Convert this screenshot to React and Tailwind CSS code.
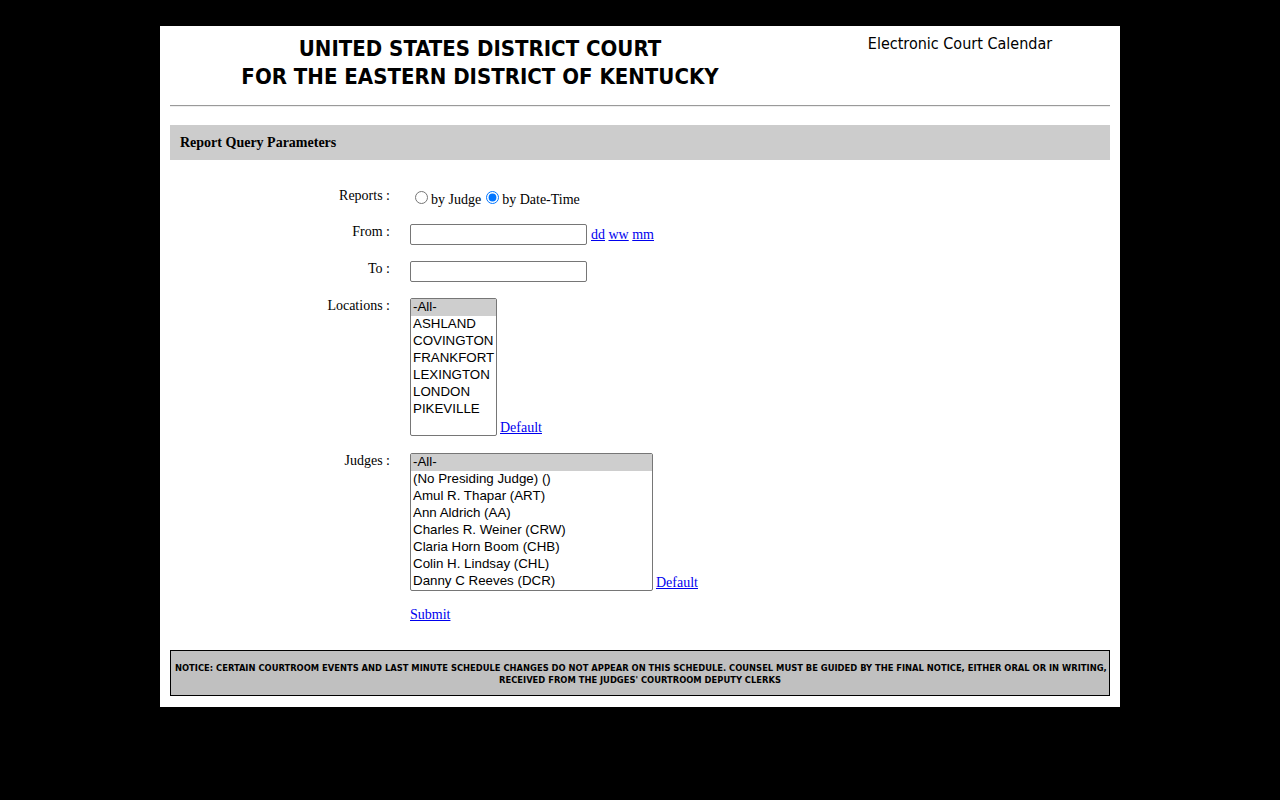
import React from "react";

const serif = { fontFamily: '"Liberation Serif", "Times New Roman", serif' };
const arial = { fontFamily: '"Liberation Sans", Arial, sans-serif' };
const tahoma = { fontFamily: '"DejaVu Sans Condensed", "DejaVu Sans", Verdana, sans-serif' };

function ListBox({ items, width, rows = 8 }) {
  const padded = [...items];
  while (padded.length < rows) padded.push("");
  return (
    <div
      className={`${width} h-[138px] border border-[#767676] rounded-[2px] bg-white overflow-hidden text-[13.333px] text-black`}
      style={arial}
    >
      {padded.slice(0, rows).map((it, i) => (
        <div
          key={i}
          className={`h-[17px] leading-[16px] pl-[2px] whitespace-nowrap ${i === 0 ? "bg-[#cecece]" : ""}`}
        >
          {it}
        </div>
      ))}
    </div>
  );
}

function Label({ children, className = "" }) {
  return (
    <div className={`w-[230px] shrink-0 text-right text-[14px] leading-[16px] text-black ${className}`} style={serif}>
      {children}
    </div>
  );
}

export default function App() {
  return (
    <div className="min-h-[800px] bg-black pt-[26px]">
      <div className="w-[960px] mx-auto bg-white pb-[11px]">
        {/* Header */}
        <div className="flex pt-[9px] h-[79px]">
          <div
            className="w-[640px] text-center font-bold text-[22px] leading-[28px] text-black"
            style={tahoma}
          >
            <div>UNITED STATES DISTRICT COURT</div>
            <div>FOR THE EASTERN DISTRICT OF KENTUCKY</div>
          </div>
          <div className="w-[320px] -mt-[1px] text-center text-[16px] leading-[19px] text-black" style={tahoma}>
            Electronic Court Calendar
          </div>
        </div>
        <div className="mx-[10px] border-t border-t-[#9a9a9a] border-b border-b-[#eeeeee]"></div>

        {/* Section bar */}
        <div className="mx-[10px] mt-[18px] h-[35px] bg-[#cccccc] flex items-center pl-[10px]">
          <span className="font-bold text-[14px] text-black" style={serif}>
            Report Query Parameters
          </span>
        </div>

        {/* Form */}
        <div className="mt-[27px]">
          <div className="flex items-start gap-[20px]">
            <Label className="mt-[1px]">Reports :</Label>
            <div className="flex items-start text-[14px] leading-[16px] text-black mt-[4px]" style={serif}>
              <input type="radio" name="rep" className="w-[13px] h-[13px] ml-[5px] mr-[3px] accent-[#0075ff]" />
              <span className="mt-[1px]">by Judge</span>
              <input type="radio" name="rep" defaultChecked className="w-[13px] h-[13px] ml-[5px] mr-[3px] accent-[#0075ff]" />
              <span className="mt-[1px]">by Date-Time</span>
            </div>
          </div>

          <div className="flex items-start gap-[20px] mt-[16px]">
            <Label>From :</Label>
            <div className="flex items-center gap-[4px]">
              <div className="w-[177px] h-[21px] border border-[#767676] rounded-[2px] bg-white"></div>
              <div className="text-[14px] leading-[16px] mt-[1px]" style={serif}>
                <a href="#" className="text-[#0000ee] underline">dd</a>{" "}
                <a href="#" className="text-[#0000ee] underline">ww</a>{" "}
                <a href="#" className="text-[#0000ee] underline">mm</a>
              </div>
            </div>
          </div>

          <div className="flex items-start gap-[20px] mt-[16px]">
            <Label>To :</Label>
            <div className="w-[177px] h-[21px] border border-[#767676] rounded-[2px] bg-white"></div>
          </div>

          <div className="flex items-start gap-[20px] mt-[16px]">
            <Label>Locations :</Label>
            <div className="flex items-end gap-[3px]">
              <ListBox
                width="w-[87px]"
                items={["-All-", "ASHLAND", "COVINGTON", "FRANKFORT", "LEXINGTON", "LONDON", "PIKEVILLE"]}
              />
              <a href="#" className="text-[14px] leading-[16px] text-[#0000ee] underline" style={serif}>
                Default
              </a>
            </div>
          </div>

          <div className="flex items-start gap-[20px] mt-[17px]">
            <Label>Judges :</Label>
            <div className="flex items-end gap-[3px]">
              <ListBox
                width="w-[243px]"
                items={[
                  "-All-",
                  "(No Presiding Judge) ()",
                  "Amul R. Thapar (ART)",
                  "Ann Aldrich (AA)",
                  "Charles R. Weiner (CRW)",
                  "Claria Horn Boom (CHB)",
                  "Colin H. Lindsay (CHL)",
                  "Danny C Reeves (DCR)",
                ]}
              />
              <a href="#" className="text-[14px] leading-[16px] text-[#0000ee] underline" style={serif}>
                Default
              </a>
            </div>
          </div>

          <div className="flex gap-[20px] mt-[16px]">
            <div className="w-[230px]"></div>
            <a href="#" className="text-[14px] leading-[16px] text-[#0000ee] underline" style={serif}>
              Submit
            </a>
          </div>
        </div>

        {/* Notice */}
        <div className="mx-[10px] mt-[27px] border border-black bg-[#c0c0c0] pt-[11px] pb-[9px] px-[4px] text-center">
          <p className="text-[9.3px] leading-[12px] font-bold text-black whitespace-nowrap" style={tahoma}>
            NOTICE: CERTAIN COURTROOM EVENTS AND LAST MINUTE SCHEDULE CHANGES DO NOT APPEAR ON THIS SCHEDULE. COUNSEL MUST BE GUIDED BY THE FINAL NOTICE, EITHER ORAL OR IN WRITING,
            <br />
            RECEIVED FROM THE JUDGES' COURTROOM DEPUTY CLERKS
          </p>
        </div>
      </div>
    </div>
  );
}
